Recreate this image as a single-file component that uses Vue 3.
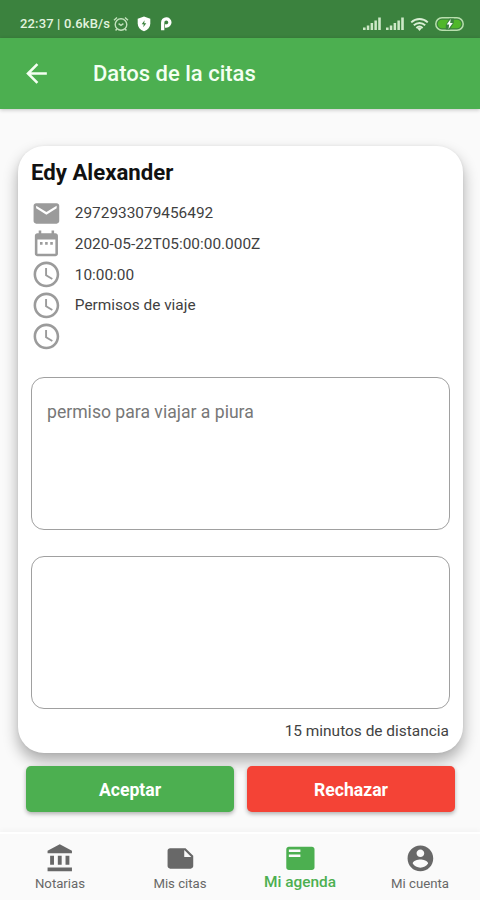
<script setup>
const icons = {
  mail: 'M20 4H4c-1.1 0-1.99.9-1.99 2L2 18c0 1.1.9 2 2 2h16c1.1 0 2-.9 2-2V6c0-1.1-.9-2-2-2zm0 4l-8 5-8-5V6l8 5 8-5v2z',
  date: 'M9 11H7v2h2v-2zm4 0h-2v2h2v-2zm4 0h-2v2h2v-2zm2-7h-1V2h-2v2H8V2H6v2H5c-1.11 0-1.99.9-1.99 2L3 20c0 1.1.89 2 2 2h14c1.1 0 2-.9 2-2V6c0-1.1-.9-2-2-2zm0 16H5V9h14v11z',
  clock: 'M11.99 2C6.47 2 2 6.48 2 12s4.47 10 9.99 10C17.52 22 22 17.52 22 12S17.52 2 11.99 2zM12 20c-4.42 0-8-3.58-8-8s3.58-8 8-8 8 3.58 8 8-3.58 8-8 8zm.5-13H11v6l5.25 3.15.75-1.23-4.5-2.67z',
  bank: 'M4 10v7h3v-7H4zm6 0v7h3v-7h-3zM2 22h19v-3H2v3zm14-12v7h3v-7h-3zm-4.5-9L2 6v2h19V6l-9.5-5z',
  note: 'M22 10l-6-6H4c-1.1 0-2 .9-2 2v12.01c0 1.1.9 1.99 2 1.99l16-.01c1.1 0 2-.89 2-1.99v-8zm-7-4.5l5.5 5.5H15V5.5z',
  list: 'M21 3H3c-1.1 0-2 .9-2 2v14c0 1.1.9 2 2 2h18c1.1 0 2-.9 2-2V5c0-1.1-.9-2-2-2zm-9 8H3V9h9v2zm0-4H3V5h9v2z',
  account: 'M12 2C6.48 2 2 6.48 2 12s4.48 10 10 10 10-4.48 10-10S17.52 2 12 2zm0 3c1.66 0 3 1.34 3 3s-1.34 3-3 3-3-1.34-3-3 1.34-3 3-3zm0 14.2c-2.5 0-4.71-1.28-6-3.22.03-1.99 4-3.08 6-3.08 1.99 0 5.97 1.09 6 3.08-1.29 1.94-3.5 3.22-6 3.22z',
}
const rows = [
  { icon: 'mail', text: '2972933079456492' },
  { icon: 'date', text: '2020-05-22T05:00:00.000Z' },
  { icon: 'clock', text: '10:00:00' },
  { icon: 'clock', text: 'Permisos de viaje' },
  { icon: 'clock', text: '' },
]
const tabs = [
  { icon: 'bank', text: 'Notarias' },
  { icon: 'note', text: 'Mis citas' },
  { icon: 'list', text: 'Mi agenda', active: true },
  { icon: 'account', text: 'Mi cuenta' },
]
</script>

<template>
  <div class="screen">
    <header class="status">
      <span class="net">22:37 | 0.6kB/s</span>
      <svg class="alarm" viewBox="0 0 16 16" fill="none" stroke="currentColor" stroke-width="1.4">
        <circle cx="8" cy="8.5" r="5.8" />
        <path d="M1 4.2 4 1.5M15 4.2 12 1.5M3.8 13 2.6 14.5M12.2 13l1.2 1.5M5.6 7.7 8 9.3l2.4-1.6" />
      </svg>
      <svg class="shield" viewBox="0 0 14 16">
        <path fill="currentColor" d="M7 .6 13.3 2.8v4.7c0 3.6-2.3 6.2-6.3 7.8-4-1.6-6.3-4.2-6.3-7.8V2.8z" />
        <path fill="#3b823e" d="M7.6 4.2 4.7 8.2h2l-.4 3.1 3-4.1H7.2z" />
      </svg>
      <svg class="park" viewBox="0 0 12 16">
        <path d="M2.7 14.2V6.500a3.600 3.600 0 1 1 3.600 3.500H5" fill="none" stroke="currentColor" stroke-width="3.3" />
      </svg>
      <div class="spacer"></div>
      <svg v-for="n in 2" :key="n" class="signal" viewBox="0 0 18 14" fill="currentColor">
        <path d="M0 10.5h2.6V13H0zM3.8 8.5h2.5V13H3.8zM7.6 6h2.5v7H7.6zM11.4 3.5h2.5V13h-2.5zM15.2.5h2.6V13h-2.6z" />
      </svg>
      <svg class="wifi" viewBox="0 0 20 15" fill="none" stroke="currentColor" stroke-width="2">
        <path d="M1.3 5.3c5-4.7 12.4-4.7 17.4 0M4 8.3c3.5-3.2 8.5-3.2 12 0M6.7 11.1c2-1.7 4.6-1.7 6.6 0" />
        <path d="M7.6 11.4 10 14.3l2.4-2.9c-1.4-1.1-3.4-1.1-4.8 0z" fill="currentColor" stroke="none" />
      </svg>
      <svg class="battery" viewBox="0 0 29 14">
        <rect x=".8" y=".8" width="27.4" height="12.4" rx="6.2" fill="#3b823e" stroke="#b9dfae" stroke-width="1.5" />
        <rect x="2.8" y="2.8" width="23.4" height="8.4" rx="4.2" fill="#50b72a" />
        <path d="M10.800 8 14.500 1.500h4.300V6L15 12.500h-4.200z" fill="#3b823e" />
        <path d="M15.700 2 11.700 7.600h2.500L13.500 12l4.300-5.900h-2.600z" fill="#fff" />
      </svg>
    </header>

    <div class="appbar">
      <svg class="back" viewBox="0 0 24 24"><path fill="currentColor" d="M20 11H7.83l5.59-5.59L12 4l-8 8 8 8 1.41-1.41L7.83 13H20v-2z" /></svg>
      <h1>Datos de la citas</h1>
    </div>

    <main>
      <section class="card">
        <h2>Edy Alexander</h2>
        <ul class="rows">
          <li v-for="(r, i) in rows" :key="i">
            <svg viewBox="0 0 24 24"><path :d="icons[r.icon]" fill="currentColor" /></svg>
            <span>{{ r.text }}</span>
          </li>
        </ul>
        <div class="box"><span>permiso para viajar a piura</span></div>
        <div class="box"></div>
        <p class="distance">15 minutos de distancia</p>
      </section>
      <div class="actions">
        <button class="accept">Aceptar</button>
        <button class="reject">Rechazar</button>
      </div>
    </main>

    <nav>
      <a v-for="t in tabs" :key="t.text" :class="{ active: t.active }">
        <svg viewBox="0 0 24 24"><path :d="icons[t.icon]" fill="currentColor" /></svg>
        <span>{{ t.text }}</span>
      </a>
    </nav>
  </div>
</template>

<style>
body { margin: 0; background: #fafafa; }
</style>

<style scoped>
* { box-sizing: border-box; }
.screen {
  width: 480px; height: 900px; display: flex; flex-direction: column;
  background: #fafafa; font-family: Roboto, "Liberation Sans", sans-serif; overflow: hidden;
}
.status {
  height: 38px; flex: none; background: #3b823e; color: #e2f3df;
  display: flex; align-items: center; padding: 10px 16px 0 20px;
}
.net { font-size: 13px; font-weight: 500; letter-spacing: .15px; white-space: pre; width: 91px; line-height: 16px; }
.alarm { width: 16px; height: 16px; margin-left: 2px; color: #c3e2bd; }
.shield { width: 14px; height: 16px; margin-left: 8px; color: #fff; }
.park { width: 12px; height: 16px; margin-left: 9px; color: #fff; }
.spacer { flex: 1; }
.signal { width: 18px; height: 14px; margin-right: 5px; color: #cde8c7; }
.wifi { width: 19px; height: 15px; margin: 0 6px 0 1px; color: #d9efd4; }
.battery { width: 29px; height: 14px; }
.appbar {
  height: 71px; flex: none; background: #4caf50; color: #f4fff2; display: flex;
  align-items: center; padding-left: 21px; box-shadow: 0 1px 4px rgba(0, 0, 0, .22);
}
.back { width: 31px; height: 31px; }
h1 { margin: 0 0 0 41px; font-size: 22px; line-height: 30px; font-weight: 500; white-space: nowrap; }
main { flex: 1; padding: 37px 17px 0 18px; }
.card {
  height: 607px; background: #fff; border-radius: 26px; padding: 11px 13px 0;
  box-shadow: 0 8px 15px rgba(0, 0, 0, .32), 0 0 3px rgba(0, 0, 0, .06);
}
h2 { margin: 0; font-size: 22.2px; line-height: 30px; font-weight: 700; color: #111; white-space: nowrap; }
.rows { list-style: none; margin: 10.6px 0 25.4px; padding: 0; }
.rows li { height: 30.8px; display: flex; align-items: center; }
.rows svg { width: 30.8px; height: 30.8px; color: #9b9b9b; margin-right: 13px; }
.rows span { font-size: 15.4px; line-height: 21px; color: #3f3f3f; white-space: nowrap; padding-top: 1px; }
.box {
  height: 153px; border: 1px solid #a0a0a0; border-radius: 13px; margin-bottom: 26px;
  padding: 22px 15px; font-size: 17.6px; line-height: 24px; color: #777;
}
.distance { margin: -14px 1px 0 0; text-align: right; font-size: 15.45px; line-height: 20px; color: #424242; }
.actions { display: flex; gap: 13px; padding: 13px 8px 0; position: relative; }
button {
  flex: 1; height: 46px; border: 0; border-radius: 5px; color: #fff; padding: 2px 0 0;
  font: 700 17.6px/44px Roboto, sans-serif; box-shadow: 0 2px 4px rgba(0, 0, 0, .3);
}
.accept { background: #4caf50; }
.reject { background: #f44336; }
nav { height: 68px; flex: none; display: flex; background: #fafafa; border-top: 2px solid #fff; box-shadow: 0 -2px 5px rgba(0, 0, 0, .03); }
nav a { flex: 1; display: flex; flex-direction: column; align-items: center; padding-top: 9px; color: #686868; }
nav svg { width: 30.8px; height: 30.8px; flex: none; }
nav span { font-size: 13.2px; line-height: 18px; white-space: nowrap; margin-top: 1px; }
nav .active { color: #4caf50; }
nav .active span { font-size: 15.4px; font-weight: 500; margin-top: -1px; }
</style>
